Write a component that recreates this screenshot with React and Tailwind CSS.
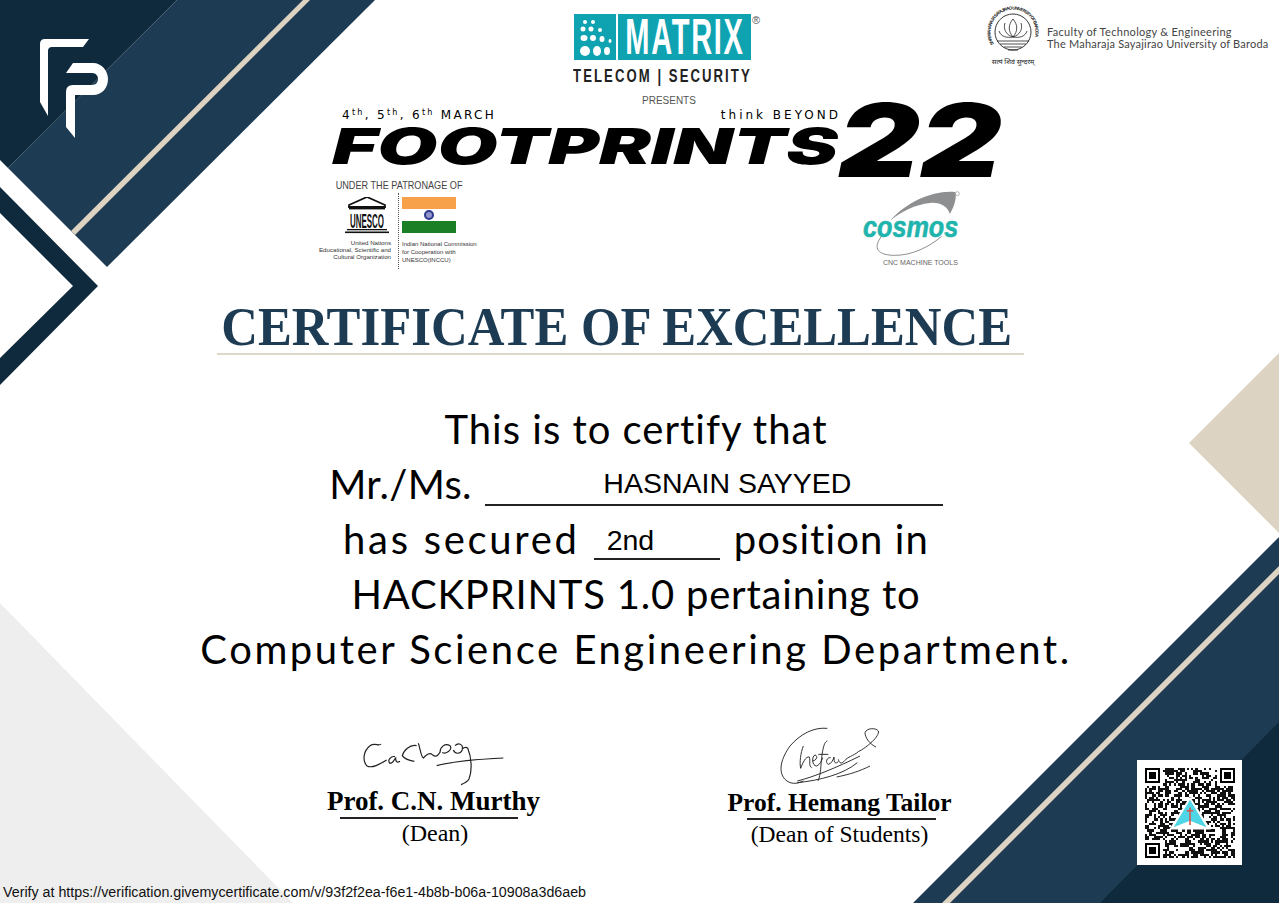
import React from "react";

// seeded noise so the qr pattern stays the same between renders
function qrCells() {
  const n = 41;
  const cells = [];
  let seed = 1337;
  const next = () => {
    seed = (seed * 1103515245 + 12345) & 0x7fffffff;
    return (seed >> 8) % 100;
  };
  const inFinder = (x, y) =>
    (x < 8 && y < 8) || (x > n - 9 && y < 8) || (x < 8 && y > n - 9);
  for (let y = 0; y < n; y++) {
    for (let x = 0; x < n; x++) {
      const on = next() < 52;
      if (on && !inFinder(x, y)) cells.push([x, y]);
    }
  }
  return cells;
}

function Finder({ x, y }) {
  return (
    <g>
      <rect x={x + 0.5} y={y + 0.5} width="6" height="6" fill="none" stroke="#000" />
      <rect x={x + 2} y={y + 2} width="3" height="3" fill="#000" />
    </g>
  );
}

function QrCode() {
  return (
    <div className="w-[105px] h-[105px] bg-white flex items-center justify-center">
      <svg width="90" height="90" viewBox="0 0 41 41" shapeRendering="crispEdges">
        {qrCells().map(([x, y]) => (
          <rect key={x + "-" + y} x={x} y={y} width="1" height="1" fill="#111" />
        ))}
        <Finder x={0} y={0} />
        <Finder x={34} y={0} />
        <Finder x={0} y={34} />
        <g shapeRendering="auto">
          <path d="M20.5 13 L30 28 L11 28 Z" fill="#fff" />
          <path d="M20.5 14.5 L28 27 L20.5 24 L13 27 Z" fill="#4fd6e6" />
          <path d="M20.5 18 L20.5 26 M19 19.5 L22 19.5" stroke="#d9534f" strokeWidth="0.7" fill="none" />
        </g>
      </svg>
    </div>
  );
}

function Backdrop() {
  return (
    <svg className="absolute inset-0" width="1279" height="903" viewBox="0 0 1279 903">
      <polygon points="0,603 293,903 0,903" fill="#eeeeee" />
      <polygon points="177,0 375,0 107,267 8,168" fill="#1d3b53" />
      <polygon points="0,0 177,0 8,168 0,160" fill="#0f2a3c" />
      <polygon points="303,0 310,0 75,235 71,231" fill="#ddd3c3" />
      <polygon points="0,187 98,286 0,385 0,358 73,286 0,213" fill="#0f2a3c" />
      <polygon points="1279,353 1189,443 1279,533" fill="#ddd3c3" />
      <polygon points="1279,537 913,903 1279,903" fill="#1d3b53" />
      <polygon points="1279,566 1279,574 950,903 942,903" fill="#ddd3c3" />
      <polygon points="1279,722 1100,903 1279,903" fill="#0f2a3c" />
      {/* fp logo */}
      <path d="M45 39 L89 39 L83 47 L52 47 Q48 47 48 51 L48 116 L40 102 L40 44 Q40 39 45 39 Z" fill="#fff" />
      <path
        d="M66 73 L73 63 L93 63 C102 63 108 71 108 79 C108 88 102 95 93 95 L75 95 L75 138 L66 127 L66 92 Q66 85 73 85 L92 85 C96 85 98 82 98 79 C98 76 96 73 92 73 Z"
        fill="#fff"
      />
    </svg>
  );
}

function MatrixLogo() {
  return (
    <div className="w-[190px] relative">
      <div className="flex gap-[2px] h-[46px] w-[177px]">
        <div className="w-[42px] bg-[#0fa3b1]">
          <svg width="42" height="46" viewBox="0 0 42 46" fill="#fff">
            <circle cx="11" cy="8" r="2" />
            <circle cx="19" cy="8" r="2" />
            <circle cx="9" cy="15" r="2.5" />
            <circle cx="17" cy="15" r="2.5" />
            <circle cx="26" cy="16" r="2" />
            <ellipse cx="10" cy="24" rx="3.5" ry="3" />
            <ellipse cx="19" cy="24" rx="3" ry="3" />
            <ellipse cx="28" cy="25" rx="2.5" ry="3" />
            <ellipse cx="36" cy="27" rx="1.5" ry="2" />
            <ellipse cx="11" cy="37" rx="5" ry="5" />
            <ellipse cx="23" cy="37" rx="4" ry="5" />
            <ellipse cx="33" cy="37" rx="3" ry="4" />
          </svg>
        </div>
        <div className="w-[133px] bg-[#0fa3b1] flex items-center justify-center">
          <span className="text-white text-[50px] leading-none font-bold tracking-[3px] scale-x-[0.58] whitespace-nowrap font-['Liberation_Sans',sans-serif]">
            MATRIX
          </span>
        </div>
      </div>
      <span className="absolute left-[178px] top-[-2px] text-[11px] text-[#555] font-['Liberation_Sans',sans-serif]">®</span>
      <div className="w-[177px] mt-[6px] flex justify-center">
        <span className="text-[#222] text-[19px] leading-[20px] font-bold tracking-[3px] scale-x-[0.69] whitespace-nowrap font-['Liberation_Sans',sans-serif]">
          TELECOM | SECURITY
        </span>
      </div>
    </div>
  );
}

function MsuLogo() {
  return (
    <div className="flex items-start gap-[5px] -mt-[8px]">
      <div className="w-[58px] flex flex-col items-center">
        <svg width="58" height="50" viewBox="0 0 58 50" fill="none" stroke="#222">
          <path id="msuRing" d="M10 38 A22.5 22.5 0 1 1 48 38" stroke="none" />
          <text fontSize="4.5" fill="#222" stroke="none" fontWeight="700" fontFamily="Liberation Sans, sans-serif">
            <textPath href="#msuRing" textLength="88" lengthAdjust="spacing">SHRI MAHARAJA SAYAJIRAO UNIVERSITY OF BARODA</textPath>
          </text>
          <circle cx="29" cy="26" r="18" strokeWidth="0.9" />
          <path d="M29 13 C24 19 24 25 29 31 C34 25 34 19 29 13 Z M21 17 C19 23 22 29 29 31 M37 17 C39 23 36 29 29 31 M15 25 C17 31 23 32 29 31 M43 25 C41 31 35 32 29 31" strokeWidth="0.8" />
          <path d="M13 35 H45 M16 38 H42 M20 41 H38 M24 44 H34" strokeWidth="0.8" />
        </svg>
        <span className="mt-[1px] text-[7px] leading-[10px] text-[#222] whitespace-nowrap font-['Noto_Sans',sans-serif]">सत्यं शिवं सुन्दरम्</span>
      </div>
      <div className="pt-[20px] text-[11px] leading-[12px] text-[#444] whitespace-nowrap font-['Lato',sans-serif]">
        <div className="tracking-[0.3px]">Faculty of Technology &amp; Engineering</div>
        <div className="tracking-[0.2px]">The Maharaja Sayajirao University of Baroda</div>
      </div>
    </div>
  );
}

function FootprintsLogo() {
  return (
    <div className="flex pl-[332px] h-[83px] text-black font-['Inter',sans-serif]">
      <div className="w-[508px]">
        <div className="h-[12px] pl-[310px] text-[10px] leading-[12px] text-[#555] font-['Liberation_Sans',sans-serif]">
          PRESENTS
        </div>
        <div className="flex justify-between h-[16px] pl-[10px] -mr-[1px] text-[12px] leading-[16px] tracking-[2.3px] font-['DejaVu_Sans',sans-serif] whitespace-nowrap">
          <span>
            4<span className="text-[8px] align-top leading-[12px]">th</span>, 5<span className="text-[8px] align-top leading-[12px]">th</span>, 6<span className="text-[8px] align-top leading-[12px]">th</span> MARCH
          </span>
          <span className="tracking-[3px]">think BEYOND</span>
        </div>
        <div className="text-[50px] leading-[46px] font-black italic whitespace-nowrap scale-x-[1.55] origin-left">
          FOOTPRINTS
        </div>
      </div>
      <div className="-ml-[2px] text-[102px] leading-[90px] font-black italic scale-x-[1.24] origin-left whitespace-nowrap">
        22
      </div>
    </div>
  );
}

function Patronage() {
  return (
    <div className="w-[160px] text-[#444] font-['Liberation_Sans',sans-serif]">
      <div className="pl-[18px] text-[10.5px] leading-[14px] whitespace-nowrap scale-x-[0.87] origin-left">UNDER THE PATRONAGE OF</div>
      <div className="flex mt-[5px]">
        <div className="w-[71px] flex flex-col items-end text-[#333]">
          <svg width="48" height="38" viewBox="0 0 48 38" fill="#111">
            <path d="M24 0 L42 8 L42 10 L6 10 L6 8 Z" fill="none" stroke="#111" strokeWidth="1.8" />
            <rect x="6" y="11" width="36" height="1.4" />
            <text x="7" y="30.5" fontSize="21" fontWeight="700" textLength="34" lengthAdjust="spacingAndGlyphs" fontFamily="Liberation Sans, sans-serif">UNESCO</text>
            <rect x="4" y="32" width="40" height="1.3" />
            <rect x="2" y="34.5" width="44" height="1.6" />
          </svg>
          <div className="mt-[4px] text-[6.15px] leading-[7px] text-right whitespace-nowrap">
            <div>United Nations</div>
            <div>Educational, Scientific and</div>
            <div>Cultural Organization</div>
          </div>
        </div>
        <div className="ml-[7px] w-0 h-[76px] -mt-[4px] border-l border-dotted border-[#555]" />
        <div className="ml-[3px] text-[#333]">
          <div className="w-[54px] h-[36px] flex flex-col justify-between items-center relative">
            <div className="w-full h-[12px] bg-[#f7a14a]" />
            <div className="w-[10px] h-[10px] rounded-full border-2 border-[#2e3a8c] bg-[#8f95c9] absolute top-[13px]" />
            <div className="w-full h-[12px] bg-[#1a7f25]" />
          </div>
          <div className="mt-[7px] text-[6px] leading-[8px] whitespace-nowrap">
            <div>Indian National Commission</div>
            <div>for Cooperation with</div>
            <div>UNESCO(INCCU)</div>
          </div>
        </div>
      </div>
    </div>
  );
}

function CosmosLogo() {
  return (
    <div className="w-[140px] h-[100px] relative">
      <svg className="absolute inset-0" width="140" height="100" viewBox="0 0 420 300">
        <path d="M150 128 C200 70 285 35 345 42 C352 60 342 85 330 108 C322 85 300 72 270 75 C225 80 185 100 150 128 Z" fill="#8d8f91" />
        <path d="M128 170 C100 205 105 230 160 232 C215 234 270 205 305 175" fill="none" stroke="#8d8f91" strokeWidth="3" />
        <circle cx="352" cy="47" r="6" fill="none" stroke="#777" strokeWidth="1.5" />
      </svg>
      <div className="absolute left-[23px] top-[34px] text-[#1fb5ad] text-[30px] leading-[30px] font-bold italic scale-x-[0.84] origin-left [-webkit-text-stroke:0.6px_#1fb5ad] font-['Liberation_Sans',sans-serif]">
        cosmos
      </div>
      <div className="absolute left-[43px] top-[80px] text-[#666] text-[7px] leading-[10px] whitespace-nowrap font-['Liberation_Sans',sans-serif]">
        CNC MACHINE TOOLS
      </div>
    </div>
  );
}

function Signature({ children, name, role, nameClass, roleClass, lineClass, boxClass }) {
  return (
    <div className={boxClass + " flex flex-col items-center font-['Liberation_Serif',serif] text-black"}>
      {children}
      <div className={nameClass + " font-bold whitespace-nowrap"}>{name}</div>
      <div className={lineClass + " h-[2px] bg-[#222]"} />
      <div className={roleClass + " whitespace-nowrap"}>{role}</div>
    </div>
  );
}

export default function App() {
  return (
    <div className="relative w-[1279px] h-[903px] bg-white overflow-hidden">
      <Backdrop />
      <div className="relative">
        <header className="h-[298px]">
          <div className="flex pl-[574px] pt-[14px] h-[95px]">
            <MatrixLogo />
            <div className="ml-[220px]">
              <MsuLogo />
            </div>
          </div>
          <FootprintsLogo />
          <div className="flex pl-[320px]">
            <Patronage />
            <div className="ml-[360px]">
              <CosmosLogo />
            </div>
          </div>
        </header>

        <div className="ml-[217px] w-[807px] h-[57px] pr-[8px] border-b-2 border-[#ddd8c8] flex justify-center items-end">
          <h1 className="text-[#1d3b53] text-[54px] leading-[52px] font-bold whitespace-nowrap scale-x-[0.94] font-['Liberation_Serif',serif]">
            CERTIFICATE OF EXCELLENCE
          </h1>
        </div>

        <div className="w-[1272px] mt-[47px] flex flex-col items-center text-black text-[40px] leading-[55px] font-['Lato',sans-serif] whitespace-nowrap">
          <div className="tracking-[1px]">This is to certify that</div>
          <div className="flex h-[55px]">
            <span className="tracking-[0.3px]">Mr./Ms.</span>
            <span className="ml-[13px] w-[458px] h-[49px] border-b-2 border-[#222] pl-[27px] text-center text-[28.5px] leading-[52px] font-['Liberation_Sans',sans-serif]">
              HASNAIN SAYYED
            </span>
          </div>
          <div className="flex h-[55px]">
            <span className="tracking-[2.7px]">has secured</span>
            <span className="mx-[14px] w-[126px] h-[48px] border-b-2 border-[#222] pl-[13px] text-[28.5px] leading-[56px] font-['Liberation_Sans',sans-serif]">
              2nd
            </span>
            <span className="tracking-[1.1px]">position in</span>
          </div>
          <div className="tracking-[0.8px]">HACKPRINTS 1.0 pertaining to</div>
          <div className="tracking-[2.55px]">Computer Science Engineering Department.</div>
        </div>

        <div className="flex mt-[47px] items-start">
          <Signature
            boxClass="ml-[325px] w-[217px]"
            nameClass="text-[27px] leading-[31px]"
            roleClass="ml-[3px] mt-[1px] text-[24px] leading-[26px]"
            name="Prof. C.N. Murthy"
            role="(Dean)"
            lineClass="w-[178px] mr-[10px]"
          >
            <div className="w-full h-[62px] pl-[30px] pt-[10px]">
              <svg className="block" width="155" height="55" viewBox="0 0 465 165" fill="none" stroke="#222" strokeWidth="3.6">
                <path d="M78 30 C72 38 60 25 45 35 C25 50 22 80 35 95 C50 105 75 90 95 78 M120 68 C108 65 95 80 105 88 C115 88 118 75 122 72 C122 82 125 88 135 82 M185 35 C165 30 145 50 142 65 C148 75 165 80 178 82 M190 28 C195 40 198 70 205 72 C215 60 225 55 232 62 C240 68 245 70 255 55 C255 40 270 25 285 35 C295 48 270 62 262 55 M295 48 C300 60 315 62 322 48 M300 35 C310 25 325 30 322 45 C325 42 332 38 338 42 C350 70 352 110 342 135 C338 142 328 148 318 152 M245 95 C300 80 380 75 445 72" />
              </svg>
            </div>
          </Signature>
          <Signature
            boxClass="ml-[186px] w-[223px]"
            nameClass="text-[25.5px] leading-[30px]"
            roleClass="text-[23.5px] leading-[29px]"
            name="Prof. Hemang Tailor"
            role="(Dean of Students)"
            lineClass="w-[189px] ml-[4px]"
          >
            <div className="w-full h-[64px] pl-[42px] -mt-[3px] mb-[3px]">
              <svg className="block" width="120" height="70" viewBox="0 0 360 210" fill="none" stroke="#222" strokeWidth="2.8">
                <path d="M172 22 C130 18 90 40 60 75 C35 110 22 150 45 175 C60 190 80 190 100 180 M100 75 C92 95 88 125 92 142 C98 125 108 105 118 108 C122 120 115 135 125 140 M128 120 C140 118 145 105 135 102 C125 105 125 135 140 135 C150 130 155 120 158 110 M172 60 C160 62 155 100 152 145 C150 165 146 175 144 180 M145 100 H175 M182 110 C170 108 165 125 175 130 C185 128 190 115 192 108 C192 125 195 130 205 122 M205 115 C208 128 215 130 225 118 C232 108 250 105 265 92 C290 80 330 45 325 30 C318 20 290 20 285 35 C285 50 300 70 318 78 M82 180 C130 168 200 140 270 105 M82 185 C150 178 220 160 262 125 M200 168 C240 160 270 150 300 135" />
              </svg>
            </div>
          </Signature>
          <div className="ml-[186px] mt-[36px]">
            <QrCode />
          </div>
        </div>

        <div className="absolute left-[3px] top-[883px] text-[14.25px] leading-[18px] text-[#111] whitespace-nowrap font-['Liberation_Sans',sans-serif]">
          Verify at https://verification.givemycertificate.com/v/93f2f2ea-f6e1-4b8b-b06a-10908a3d6aeb
        </div>
      </div>
    </div>
  );
}
